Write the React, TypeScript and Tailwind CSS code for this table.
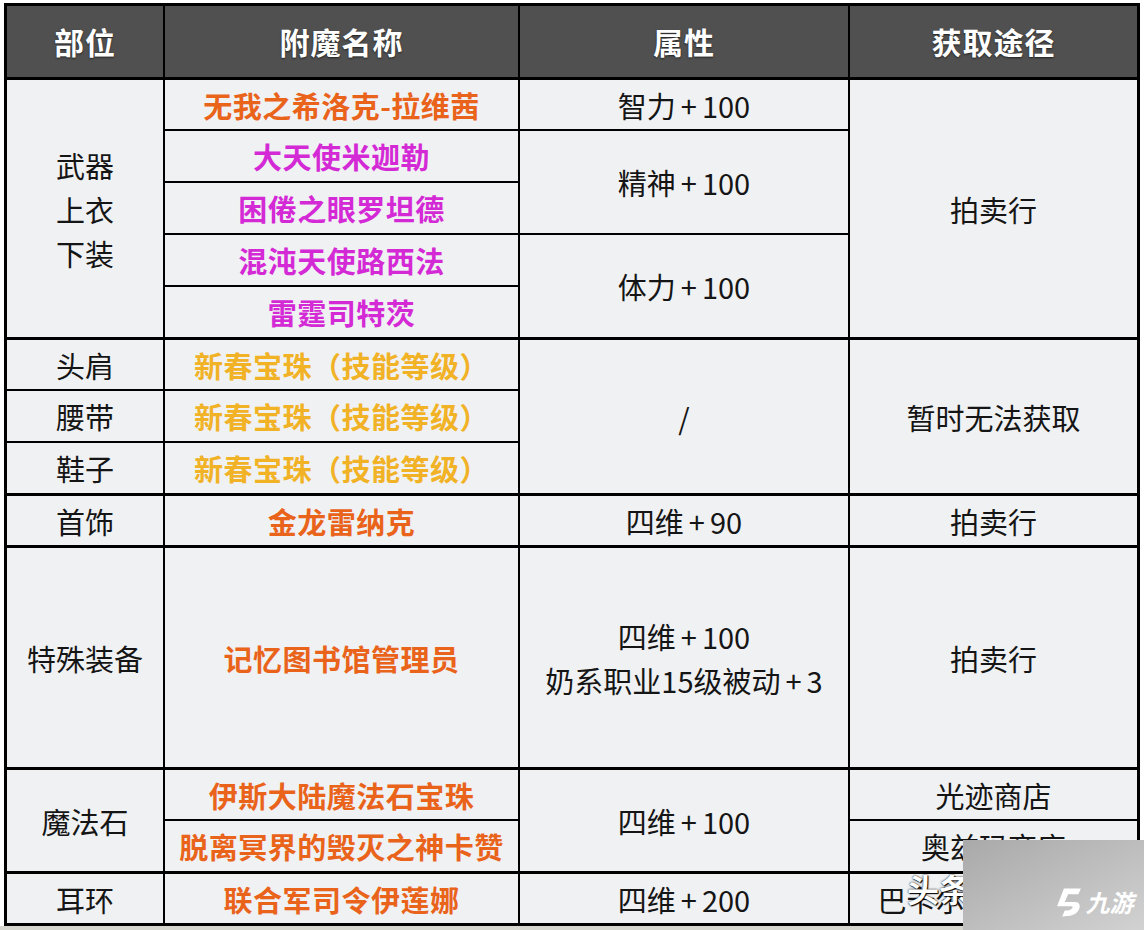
import clsx from 'clsx';

type Tone = 'black' | 'orange' | 'magenta' | 'gold';

const toneClass: Record<Tone, string> = {
  black: 'text-[#151515] font-normal',
  orange: 'text-[#e9631b] font-bold',
  magenta: 'text-[#d42ad6] font-bold',
  gold: 'text-[#f1b226] font-bold',
};

// "+" in the source font sits wider than in Noto, pad it a little
function Plus({ text }: { text: string }) {
  const parts = text.split('+');
  return (
    <>
      {parts.map((p, i) => (
        <span key={i}>
          {i > 0 && <span className="px-[5px]">+</span>}
          {p}
        </span>
      ))}
    </>
  );
}

function Cell({
  pos,
  lines,
  tone = 'black',
  top = false,
}: {
  pos: string;
  lines: string[];
  tone?: Tone;
  top?: boolean;
}) {
  return (
    <div
      className={clsx(
        'flex flex-col items-center justify-center bg-[#f0f1f3] text-center leading-[44px]',
        tone === 'black' ? 'text-[29px]' : 'text-[29px] tracking-[0.5px]',
        toneClass[tone],
        top && 'border-t border-black',
        pos,
      )}
    >
      {lines.map((l) => (
        <div key={l} className="whitespace-nowrap">
          <Plus text={l} />
        </div>
      ))}
    </div>
  );
}

function Head({ label }: { label: string }) {
  return (
    <div className="flex items-center justify-center bg-[#505050] text-[30px] font-bold tracking-[1px] text-white [text-shadow:0_1px_2px_rgba(0,0,0,0.6)]">
      {label}
    </div>
  );
}

export default function App() {
  return (
    <div className="relative h-[930px] w-[1144px] overflow-hidden bg-white font-['Noto_Sans_CJK_SC','Noto_Sans',sans-serif]">
      <div className="ml-[4px] mt-[3px] w-[1136px] border-[3px] border-black bg-black">
        <div className="grid grid-cols-[156px_353px_328px_287px] grid-rows-[71px_repeat(9,50px)_220px_repeat(3,50px)] gap-[2px]">
          <Head label="部位" />
          <Head label="附魔名称" />
          <Head label="属性" />
          <Head label="获取途径" />

          {/* 部位 */}
          <Cell pos="col-start-1 row-start-2 row-span-5" lines={['武器', '上衣', '下装']} top />
          <Cell pos="col-start-1 row-start-7" lines={['头肩']} top />
          <Cell pos="col-start-1 row-start-8" lines={['腰带']} />
          <Cell pos="col-start-1 row-start-9" lines={['鞋子']} />
          <Cell pos="col-start-1 row-start-10" lines={['首饰']} top />
          <Cell pos="col-start-1 row-start-11" lines={['特殊装备']} top />
          <Cell pos="col-start-1 row-start-12 row-span-2" lines={['魔法石']} top />
          <Cell pos="col-start-1 row-start-14" lines={['耳环']} top />

          {/* 附魔名称 */}
          <Cell pos="col-start-2 row-start-2" lines={['无我之希洛克-拉维茜']} tone="orange" top />
          <Cell pos="col-start-2 row-start-3" lines={['大天使米迦勒']} tone="magenta" />
          <Cell pos="col-start-2 row-start-4" lines={['困倦之眼罗坦德']} tone="magenta" />
          <Cell pos="col-start-2 row-start-5" lines={['混沌天使路西法']} tone="magenta" />
          <Cell pos="col-start-2 row-start-6" lines={['雷霆司特茨']} tone="magenta" />
          <Cell pos="col-start-2 row-start-7" lines={['新春宝珠（技能等级）']} tone="gold" top />
          <Cell pos="col-start-2 row-start-8" lines={['新春宝珠（技能等级）']} tone="gold" />
          <Cell pos="col-start-2 row-start-9" lines={['新春宝珠（技能等级）']} tone="gold" />
          <Cell pos="col-start-2 row-start-10" lines={['金龙雷纳克']} tone="orange" top />
          <Cell pos="col-start-2 row-start-11" lines={['记忆图书馆管理员']} tone="orange" top />
          <Cell pos="col-start-2 row-start-12" lines={['伊斯大陆魔法石宝珠']} tone="orange" top />
          <Cell pos="col-start-2 row-start-13" lines={['脱离冥界的毁灭之神卡赞']} tone="orange" />
          <Cell pos="col-start-2 row-start-14" lines={['联合军司令伊莲娜']} tone="orange" top />

          {/* 属性 */}
          <Cell pos="col-start-3 row-start-2" lines={['智力+100']} top />
          <Cell pos="col-start-3 row-start-3 row-span-2" lines={['精神+100']} />
          <Cell pos="col-start-3 row-start-5 row-span-2" lines={['体力+100']} />
          <Cell pos="col-start-3 row-start-7 row-span-3" lines={['/']} top />
          <Cell pos="col-start-3 row-start-10" lines={['四维+90']} top />
          <Cell pos="col-start-3 row-start-11" lines={['四维+100', '奶系职业15级被动+3']} top />
          <Cell pos="col-start-3 row-start-12 row-span-2" lines={['四维+100']} top />
          <Cell pos="col-start-3 row-start-14" lines={['四维+200']} top />

          {/* 获取途径 */}
          <Cell pos="col-start-4 row-start-2 row-span-5" lines={['拍卖行']} top />
          <Cell pos="col-start-4 row-start-7 row-span-3" lines={['暂时无法获取']} top />
          <Cell pos="col-start-4 row-start-10" lines={['拍卖行']} top />
          <Cell pos="col-start-4 row-start-11" lines={['拍卖行']} top />
          <Cell pos="col-start-4 row-start-12" lines={['光迹商店']} top />
          <Cell pos="col-start-4 row-start-13" lines={['奥兹玛商店']} />
          <Cell pos="col-start-4 row-start-14" lines={['巴卡尔攻坚战商店']} top />
        </div>
      </div>
      <div className="h-[4px] bg-[#d6d6ce]" />

      {/* watermark */}
      <div className="absolute left-[907px] top-[872px] text-[32px] font-bold leading-none text-white [text-shadow:0_0_2px_#000,1px_1px_1px_#000]">
        头条
      </div>
      <div className="absolute left-[963px] top-[840px] h-[90px] w-[181px] bg-linear-to-br from-[#a9a9a9] via-[#bdbdbd] to-[#d2d2d2]" />
      <div className="absolute left-[1052px] top-[885px] flex items-center gap-[2px] whitespace-nowrap">
        <svg width="34" height="34" viewBox="0 0 40 38" fill="none">
          <path
            d="M14 3 L34 3 L31 10 L19 10 L15 19 L27 19 C33 19 34 24 31 29 C28 34 22 36 12 36 L15 29 C20 29 23 28 24 26 C25 24 23 24 20 24 L6 24 Z"
            fill="#ffffff"
          />
        </svg>
        <span className="inline-block text-[24px] font-bold leading-none text-white [transform:skewX(-14deg)]">九游</span>
      </div>
    </div>
  );
}
